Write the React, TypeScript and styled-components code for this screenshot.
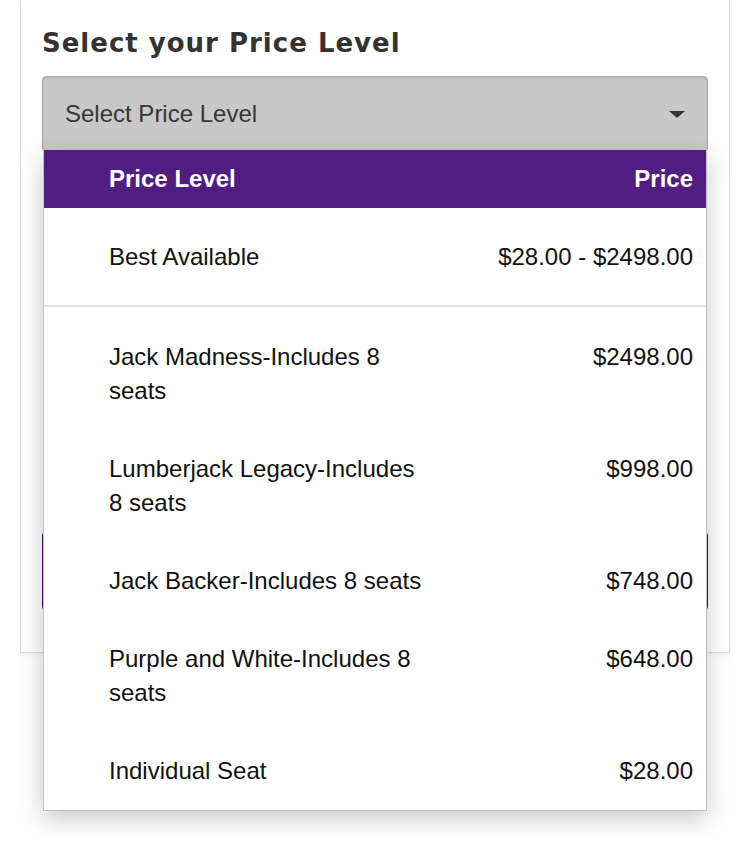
import styled, { createGlobalStyle } from "styled-components";

const GlobalStyle = createGlobalStyle`
  html, body {
    margin: 0;
    padding: 0;
    background: #ffffff;
  }

  body {
    font-family: "Liberation Sans", Arial, sans-serif;
  }
`;

const Page = styled.div`
  width: 750px;
  min-height: 841px;
  padding: 0 20px;
  box-sizing: border-box;
`;

const Card = styled.section`
  padding: 27px 21px 42px;
  margin-top: -1px;

  display: flex;
  flex-direction: column;

  border: 1px solid #dcdcdc;
  box-shadow: 0 2px 4px rgba(0, 0, 0, 0.06);
  background: #ffffff;
`;

const Title = styled.h2`
  margin: 0 0 17px;

  font-family: "DejaVu Sans", Verdana, sans-serif;
  font-size: 26px;
  font-weight: bold;
  line-height: 32px;
  letter-spacing: 1px;
  color: #333333;
`;

const SelectWrap = styled.div`
  position: relative;
`;

const SelectBox = styled.div`
  height: 76px;
  padding: 0 22px;
  box-sizing: border-box;

  display: flex;
  justify-content: space-between;
  align-items: center;

  background: #c8c8c8;
  border: 1px solid #a8a8a8;
  border-radius: 4px;
  box-shadow: inset 0 1px 2px rgba(0, 0, 0, 0.12);

  font-size: 24px;
  color: #353535;
`;

const Caret = styled.span`
  width: 0;
  height: 0;

  border-left: 8px solid transparent;
  border-right: 8px solid transparent;
  border-top: 7px solid #333333;
`;

const Menu = styled.div`
  position: absolute;
  top: 74px;
  left: 1px;
  right: 1px;
  z-index: 10;

  background: #ffffff;
  border: 1px solid #c2c2c2;
  border-top: none;
  box-shadow: 0 8px 22px rgba(0, 0, 0, 0.22);
`;

const MenuHead = styled.div`
  height: 58px;
  padding: 0 13px 0 65px;

  display: flex;
  justify-content: space-between;
  align-items: center;

  background: #521d83;

  font-size: 24px;
  font-weight: bold;
  color: #ffffff;
`;

const BestRow = styled.div`
  padding: 32px 13px 31px 65px;

  display: flex;
  justify-content: space-between;
  align-items: flex-start;

  border-bottom: 2px solid #e1e1e1;

  font-size: 24px;
  line-height: 34px;
  color: #111111;
`;

const OptionList = styled.div`
  padding-top: 11px;
`;

const OptionRow = styled.div`
  padding: 22px 13px 22px 65px;

  display: flex;
  justify-content: space-between;
  align-items: flex-start;

  font-size: 24px;
  line-height: 34px;
  color: #111111;
`;

const Label = styled.span`
  max-width: 318px;
`;

const Price = styled.span`
  white-space: nowrap;
`;

const Spacer = styled.div`
  height: 380px;
`;

const ContinueButton = styled.button`
  height: 78px;

  background: #3f1468;
  border: none;
  border-radius: 4px;
`;

const levels = [
  { name: "Jack Madness-Includes 8 seats", price: "$2498.00" },
  { name: "Lumberjack Legacy-Includes 8 seats", price: "$998.00" },
  { name: "Jack Backer-Includes 8 seats", price: "$748.00" },
  { name: "Purple and White-Includes 8 seats", price: "$648.00" },
  { name: "Individual Seat", price: "$28.00" },
];

const App = () => {
  return (
    <>
      <GlobalStyle />
      <Page>
        <Card>
          <Title>Select your Price Level</Title>
          <SelectWrap>
            <SelectBox>
              <span>Select Price Level</span>
              <Caret />
            </SelectBox>
            <Menu>
              <MenuHead>
                <span>Price Level</span>
                <span>Price</span>
              </MenuHead>
              <BestRow>
                <Label>Best Available</Label>
                <Price>$28.00 - $2498.00</Price>
              </BestRow>
              <OptionList>
                {levels.map((level) => (
                  <OptionRow key={level.name}>
                    <Label>{level.name}</Label>
                    <Price>{level.price}</Price>
                  </OptionRow>
                ))}
              </OptionList>
            </Menu>
          </SelectWrap>
          <Spacer />
          <ContinueButton aria-label="Continue" />
        </Card>
      </Page>
    </>
  );
};

export default App;
